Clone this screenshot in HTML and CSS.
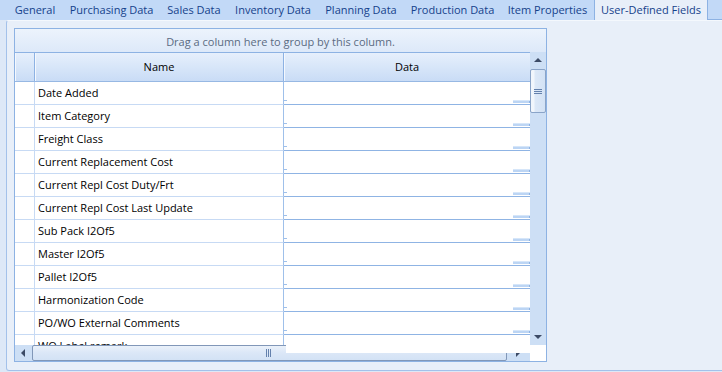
FILE: index.html
```html
<!DOCTYPE html>
<html>
<head>
<meta charset="utf-8">
<link rel="stylesheet" href="styles.css">
</head>
<body>
<div class="tabs">
  <div class="tab w1">General</div>
  <div class="tab w2">Purchasing Data</div>
  <div class="tab w3">Sales Data</div>
  <div class="tab w4">Inventory Data</div>
  <div class="tab w5">Planning Data</div>
  <div class="tab w6">Production Data</div>
  <div class="tab w7">Item Properties</div>
  <div class="tab w8 active">User-Defined Fields</div>
  <div class="filler"></div>
</div>
<div class="panel">
  <div class="grid">
    <div class="group">Drag a column here to group by this column.</div>
    <div class="top">
      <div class="left">
        <div class="head">
          <div class="hc ind"></div>
          <div class="hc name">Name</div>
          <div class="hc data">Data</div>
        </div>
        <div class="rows">
          <div class="row"><div class="ind"></div><div class="name">Date Added</div><div class="data"></div></div>
          <div class="row"><div class="ind"></div><div class="name">Item Category</div><div class="data"></div></div>
          <div class="row"><div class="ind"></div><div class="name">Freight Class</div><div class="data"></div></div>
          <div class="row"><div class="ind"></div><div class="name">Current Replacement Cost</div><div class="data"></div></div>
          <div class="row"><div class="ind"></div><div class="name">Current Repl Cost Duty/Frt</div><div class="data"></div></div>
          <div class="row"><div class="ind"></div><div class="name">Current Repl Cost Last Update</div><div class="data"></div></div>
          <div class="row"><div class="ind"></div><div class="name">Sub Pack I2Of5</div><div class="data"></div></div>
          <div class="row"><div class="ind"></div><div class="name">Master I2Of5</div><div class="data"></div></div>
          <div class="row"><div class="ind"></div><div class="name">Pallet I2Of5</div><div class="data"></div></div>
          <div class="row"><div class="ind"></div><div class="name">Harmonization Code</div><div class="data"></div></div>
          <div class="row"><div class="ind"></div><div class="name">PO/WO External Comments</div><div class="data"></div></div>
          <div class="row"><div class="ind"></div><div class="name">WO Label remark</div><div class="data"></div></div>
        </div>
      </div>
      <div class="vscroll">
        <div class="vbtn"><svg width="8" height="5" viewBox="0 0 8 5"><polygon points="4,0 8,4 0,4" fill="#3c4b66"/></svg></div>
        <div class="vthumb"><div class="grip"><i></i><i></i><i></i></div></div>
        <div class="vtrack"></div>
        <div class="vbtn"><svg width="8" height="5" viewBox="0 0 8 5"><polygon points="0,0 8,0 4,4" fill="#3c4b66"/></svg></div>
      </div>
    </div>
    <div class="bottom">
      <div class="hscroll">
        <div class="hbtn"><svg width="5" height="8" viewBox="0 0 5 8"><polygon points="4,0 4,8 0,4" fill="#3c4b66"/></svg></div>
        <div class="hthumb"><div class="hgrip"><i></i><i></i><i></i></div></div>
        <div class="hbtn right"><svg width="5" height="8" viewBox="0 0 5 8"><polygon points="0,0 4,4 0,8" fill="#3c4b66"/></svg></div>
        <div class="ghost"></div>
      </div>
      <div class="corner"></div>
    </div>
  </div>
</div>
</body>
</html>
```

FILE: styles.css
```css
html, body {
  margin: 0;
  height: 100%;
  overflow: hidden;
}
body {
  background: #dde8f7;
  font-family: "Open Sans", "Liberation Sans", sans-serif;
  font-size: 11px;
  color: #000;
}
.tabs {
  display: flex;
  height: 20px;
  background: #c2d9f7;
  padding-left: 7px;
}
.tab {
  height: 20px;
  line-height: 19px;
  text-align: center;
  color: #15428b;
  white-space: nowrap;
  box-sizing: border-box;
  flex: none;
}
.tab.active {
  background: #e8eff9;
  border-left: 1px solid #8db2e3;
  border-right: 1px solid #8db2e3;
}
.filler {
  flex: 1;
  border-bottom: 1px solid #8db2e3;
}
.w1 { width: 56px; }
.w2 { width: 97px; }
.w3 { width: 68px; }
.w4 { width: 90px; }
.w5 { width: 86px; }
.w6 { width: 97px; }
.w7 { width: 93px; }
.w8 { width: 114px; }

.panel {
  margin-left: 6px;
  margin-right: -10px;
  height: 351px;
  box-sizing: border-box;
  border: 1px solid #a3c1ea;
  border-top-color: #f4f8fd;
  border-radius: 3px;
  background: #e8eff9;
  padding: 7px;
}
.grid {
  width: 533px;
  box-sizing: border-box;
  border: 1px solid #8db2e3;
  background: #fff;
}
.group {
  height: 23px;
  line-height: 25px;
  text-align: center;
  color: #5b6b82;
  background: linear-gradient(#ecf3fc, #dde9f9);
}
.top {
  display: flex;
  height: 293px;
}
.left {
  width: 515px;
  display: flex;
  flex-direction: column;
}
.head {
  display: flex;
  height: 28px;
  border-top: 1px solid #8db2e3;
  border-bottom: 1px solid #97b8e3;
  background: linear-gradient(#e6effc, #d9e7f9 45%, #c9dcf6);
}
.hc {
  box-sizing: border-box;
  line-height: 28px;
  text-align: center;
  border-right: 1px solid #8db2e3;
  box-shadow: inset 1px 0 #f4f8fe;
}
.hc.data { border-right: none; }
.ind { width: 20px; flex: none; }
.name { width: 249px; flex: none; }
.data { width: 246px; flex: none; }
.rows {
  height: 263px;
  overflow: hidden;
}
.row {
  display: flex;
  height: 23px;
}
.row > div {
  box-sizing: border-box;
  height: 23px;
}
.row .ind {
  border-right: 1px solid #c7daf4;
  border-bottom: 1px solid #c7daf4;
}
.row .name {
  padding-left: 3px;
  line-height: 22px;
  border-right: 1px solid #9fc0ea;
  border-bottom: 1px solid #c7daf4;
  white-space: nowrap;
}
.row .data {
  position: relative;
  border-bottom: 1px solid #8fb4e4;
}
.row .data::before {
  content: "";
  position: absolute;
  left: 0;
  bottom: 3px;
  width: 3px;
  height: 1px;
  background: #9fc0ea;
}
.row .data::after {
  content: "";
  position: absolute;
  right: 0;
  bottom: 1px;
  width: 16px;
  height: 2px;
  background: #bcd5f4;
  border-right: 1px solid #8fb4e4;
  box-shadow: 0 -1px 0 #d6e6f9;
}

.vscroll {
  width: 16px;
  flex: none;
  display: flex;
  flex-direction: column;
  background: #cddff5;
}
.vbtn {
  height: 16px;
  display: flex;
  align-items: center;
  justify-content: center;
  flex: none;
}
.vthumb {
  height: 44px;
  margin: 1px 0 0 0;
  box-sizing: border-box;
  border: 1px solid #8aa4c8;
  border-radius: 2px;
  background: linear-gradient(90deg, #f1f6fc 0, #f1f6fc 3px, #dce8f7 4px, #d3e2f5 100%);
  display: flex;
  align-items: center;
  justify-content: center;
  flex: none;
}
.grip {
  display: flex;
  flex-direction: column;
  gap: 1px;
}
.grip i {
  display: block;
  width: 8px;
  height: 1px;
  background: #6481ad;
}
.vtrack { flex: 1; }

.bottom {
  display: flex;
  height: 16px;
}
.hscroll {
  position: relative;
  width: 515px;
  display: flex;
  background: #cddff5;
}
.hbtn {
  width: 17px;
  display: flex;
  align-items: center;
  justify-content: center;
  flex: none;
}
.hbtn.right { width: 23px; }
.hthumb {
  flex: 1;
  box-sizing: border-box;
  border: 1px solid #8197b8;
  border-radius: 2px;
  background: linear-gradient(#eaf1fa, #dbe7f7 50%, #d3e2f5);
  display: flex;
  align-items: center;
  justify-content: flex-end;
  padding-right: 235px;
}
.hgrip {
  display: flex;
  gap: 1px;
}
.hgrip i {
  display: block;
  width: 1px;
  height: 8px;
  background: #6481ad;
}
.ghost {
  position: absolute;
  left: 271px;
  top: 0;
  width: 244px;
  height: 8px;
  background: #fff;
}
.corner {
  width: 16px;
  background: #fff;
}
```
